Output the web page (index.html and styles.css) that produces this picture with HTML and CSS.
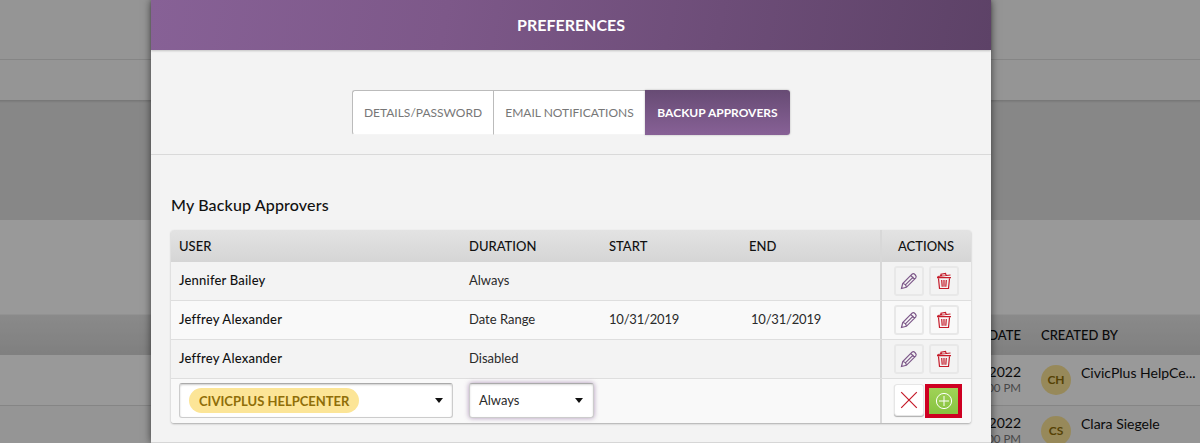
FILE: index.html
```html
<!DOCTYPE html>
<html lang="en">
<head>
    <meta charset="UTF-8">
    <meta name="viewport" content="width=device-width, initial-scale=1.0">
    <title>Preferences</title>
    <link rel="stylesheet" href="styles.css">
</head>
<body>
    <svg class="icon-defs" width="0" height="0">
        <symbol id="icon-pencil" viewBox="0 0 18 18">
            <path d="M1.5 16.5l1.2-5L12 2.2c1.9-1.5 5.2 1.6 3.8 3.7l-9.4 9.4-4.9 1.2zM2.7 11.5c1.8.2 3.4 1.7 3.7 3.8M5.6 12.6l7.8-7.8M10.8 3.5l3.7 3.7"/>
        </symbol>
        <symbol id="icon-trash" viewBox="0 0 18 18">
            <path d="M3.5 6.5l1 10h9l1-10M2 5.7h14M2.5 4.5L15.5 3M6 4V2.2l4.5-.7.6 1.8M6.7 8l.5 6.8M9 8v6.8M11.3 8l-.5 6.8"/>
        </symbol>
    </svg>

    <div class="page">
        <div class="page-header"></div>
        <div class="page-nav"></div>
        <div class="page-band"></div>
        <div class="page-section"></div>
        <div class="list-row list-head">
            <div class="list-date">DATE</div>
            <div>CREATED BY</div>
        </div>
        <div class="list-row">
            <div class="list-date">2022<small>00 PM</small></div>
            <div class="avatar">CH</div>
            <div class="list-name">CivicPlus HelpCe...</div>
        </div>
        <div class="list-row alt">
            <div class="list-date">2022<small>00 PM</small></div>
            <div class="avatar">CS</div>
            <div class="list-name">Clara Siegele</div>
        </div>
    </div>

    <div class="overlay">
        <div class="modal">
            <div class="modal-header">PREFERENCES</div>
            <div class="tabs">
                <button class="tab tab-details">DETAILS/PASSWORD</button>
                <button class="tab tab-email">EMAIL NOTIFICATIONS</button>
                <button class="tab active">BACKUP APPROVERS</button>
            </div>
            <div class="modal-body">
                <h2>My Backup Approvers</h2>
                <div class="approvers">
                    <div class="row head">
                        <div>USER</div>
                        <div>DURATION</div>
                        <div>START</div>
                        <div>END</div>
                        <div class="actions">ACTIONS</div>
                    </div>
                    <div class="row">
                        <div class="user">Jennifer Bailey</div>
                        <div>Always</div>
                        <div></div>
                        <div></div>
                        <div class="actions">
                            <button class="icon-btn edit"><svg><use href="#icon-pencil"/></svg></button>
                            <button class="icon-btn delete"><svg><use href="#icon-trash"/></svg></button>
                        </div>
                    </div>
                    <div class="row alt">
                        <div class="user">Jeffrey Alexander</div>
                        <div>Date Range</div>
                        <div class="date">10/31/2019</div>
                        <div class="date end">10/31/2019</div>
                        <div class="actions">
                            <button class="icon-btn edit"><svg><use href="#icon-pencil"/></svg></button>
                            <button class="icon-btn delete"><svg><use href="#icon-trash"/></svg></button>
                        </div>
                    </div>
                    <div class="row">
                        <div class="user">Jeffrey Alexander</div>
                        <div>Disabled</div>
                        <div></div>
                        <div></div>
                        <div class="actions">
                            <button class="icon-btn edit"><svg><use href="#icon-pencil"/></svg></button>
                            <button class="icon-btn delete"><svg><use href="#icon-trash"/></svg></button>
                        </div>
                    </div>
                    <div class="row alt new">
                        <div>
                            <div class="select user-select"><span class="chip">CIVICPLUS HELPCENTER</span><i class="caret"></i></div>
                        </div>
                        <div>
                            <div class="select focused">Always<i class="caret"></i></div>
                        </div>
                        <div></div>
                        <div></div>
                        <div class="actions">
                            <button class="icon-btn cancel"><svg viewBox="0 0 18 18"><path d="M1.2 1.2l15.6 15.6M16.8 1.2L1.2 16.8"/></svg></button>
                            <button class="add-btn"><svg viewBox="0 0 18 18"><path d="M9 4v10M4 9h10"/><circle cx="9" cy="9" r="7.6"/></svg></button>
                        </div>
                    </div>
                </div>
            </div>
        </div>
    </div>
</body>
</html>
```

FILE: styles.css
```css
* {
    box-sizing: border-box;
}

body {
    margin: 0;
    height: 443px;
    overflow: hidden;
    position: relative;
    font-family: Lato, sans-serif;
    font-size: 13px;
    color: #111;
}

button {
    font-family: inherit;
    padding: 0;
}

.icon-defs {
    display: none;
}

/* page behind the modal */
.page {
    height: 443px;
    overflow: hidden;
    background: #fff;
}

.page-header {
    height: 60px;
    background: #f8f8f8;
    border-bottom: 1px solid #dedede;
}

.page-nav {
    height: 40px;
    background: #f8f8f8;
}

.page-band {
    height: 120px;
    background: linear-gradient(#c4c4c4, #e2e2e2 3px);
}

.page-section {
    height: 95px;
    border-bottom: 1px solid #f3f3f3;
}

.list-row {
    display: flex;
    height: 51px;
    padding: 10px 0 0 971px;
    border-bottom: 1px solid #dedede;
    font-size: 14px;
    line-height: 14px;
}

.list-row.alt {
    background: #f8f8f8;
}

.list-row.list-head {
    height: 40px;
    padding-top: 0;
    border-bottom: none;
    line-height: 41px;
    font-size: 13px;
    font-weight: 500;
    background: linear-gradient(#e6e6e6, #d5d5d5);
}

.list-date {
    width: 50px;
    margin-right: 20px;
    text-align: right;
}

.list-date small {
    display: block;
    font-size: 11.5px;
    line-height: 17px;
    color: #777;
}

.avatar {
    width: 30px;
    height: 30px;
    border-radius: 50%;
    margin-right: 10px;
    background: #fce597;
    color: #8f6e08;
    font-size: 12px;
    font-weight: bold;
    line-height: 30px;
    text-align: center;
}

.list-name {
    line-height: 15px;
}

/* modal */
.overlay {
    position: absolute;
    top: 0;
    left: 0;
    width: 100%;
    height: 443px;
    background: rgba(0, 0, 0, 0.4);
}

.modal {
    width: 840px;
    height: 443px;
    margin-left: 151px;
    background: #f3f3f3;
    border-bottom: 1px solid #d6d6d6;
    box-shadow: 0 0 8px rgba(0, 0, 0, 0.6);
}

.modal-header {
    height: 50px;
    line-height: 49px;
    text-align: center;
    font-size: 16px;
    font-weight: bold;
    color: #fff;
    background: linear-gradient(100deg, #876196, #7d5889 35%, #5d4267);
    box-shadow: 0 1px 2px rgba(0, 0, 0, 0.2);
}

.tabs {
    display: flex;
    justify-content: center;
    height: 105px;
    padding-top: 40px;
    border-bottom: 1px solid #d9d9d9;
}

.tab {
    height: 45px;
    border: 1px solid #bbb;
    border-right: none;
    border-bottom-color: #f5f5f5;
    background: #fff;
    color: #777;
    font-size: 12px;
}

.tab-details {
    width: 141px;
    border-radius: 3px 0 0 3px;
}

.tab-email {
    width: 152px;
}

.tab.active {
    width: 145px;
    border: none;
    border-radius: 0 3px 3px 0;
    background: linear-gradient(#674b74, #876196);
    box-shadow: 0 0 2px rgba(0, 0, 0, 0.3);
    color: #fff;
    font-weight: bold;
}

.modal-body {
    padding: 40px 20px 0;
}

h2 {
    margin: 0 0 15px;
    font-size: 16px;
    font-weight: 500;
    line-height: 20px;
    letter-spacing: 0.15px;
}

.approvers {
    height: 193px;
    border-radius: 3px;
    overflow: hidden;
    box-shadow: 0 1px 2px rgba(0, 0, 0, 0.3);
}

.row {
    display: grid;
    grid-template-columns: 290px 140px 140px 139px 91px;
    height: 39px;
    border-bottom: 1px solid #dedede;
    line-height: 37px;
    color: #2a2a2a;
}

.row > div {
    padding-left: 8px;
}

.row.alt {
    background: #f9f9f9;
}

.row.head {
    height: 32px;
    border-bottom: none;
    line-height: 32px;
    background: linear-gradient(#e3e3e3, #d5d5d5);
    color: #111;
    font-weight: 500;
}

.row.new {
    height: 44px;
    border-bottom: none;
}

.row > .user {
    color: #111;
    font-weight: 500;
    letter-spacing: 0.2px;
}

.row > .date {
    letter-spacing: -0.2px;
}

.row > .end {
    padding-left: 10px;
}

.row > .actions {
    display: flex;
    gap: 5px;
    padding: 4px 0 0 12px;
    border-left: 2px solid #d8d8d8;
}

.head > .actions {
    padding: 0 0 0 16px;
}

.icon-btn {
    display: flex;
    align-items: center;
    justify-content: center;
    flex-shrink: 0;
    width: 30px;
    height: 30px;
    border: 2px solid #e8e8e8;
    border-radius: 3px;
    background: transparent;
}

.icon-btn svg {
    width: 18px;
    height: 18px;
    fill: none;
    stroke-width: 1.2;
}

.icon-btn.edit {
    stroke: #7d5889;
}

.icon-btn.delete {
    stroke: #c51a29;
}

.new > .actions {
    gap: 1px;
    padding-top: 5px;
}

.icon-btn.cancel {
    height: 32px;
    border: 1px solid #e6e6e6;
    background: #fff;
    box-shadow: 0 1px 1px rgba(0, 0, 0, 0.3);
    stroke: #c51a29;
}

.add-btn {
    display: flex;
    align-items: center;
    justify-content: center;
    flex-shrink: 0;
    width: 37px;
    height: 34px;
    border: 4px solid #ce0022;
    background: linear-gradient(#a0d257, #87c340);
}

.add-btn svg {
    width: 18px;
    height: 18px;
    fill: none;
    stroke: #fff;
}

.select {
    display: flex;
    align-items: center;
    justify-content: space-between;
    width: 125px;
    height: 35px;
    margin-top: 4px;
    padding: 0 9px;
    border: 1px solid #ccc;
    border-top-color: #aaa;
    border-radius: 3px;
    background: #fff;
    box-shadow: inset 0 1px 2px rgba(0, 0, 0, 0.2);
}

.select.focused {
    padding-right: 10px;
    box-shadow: 0 0 5px rgba(135, 97, 150, 0.65), inset 0 1px 2px rgba(0, 0, 0, 0.15);
}

.user-select {
    width: 274px;
}

.chip {
    height: 25px;
    padding: 0 10px;
    border-radius: 13px;
    background: #fce597;
    color: #8f6e08;
    font-weight: bold;
    line-height: 26px;
}

.caret {
    border: 4.5px solid transparent;
    border-top: 5px solid #111;
    border-bottom: none;
}
```
